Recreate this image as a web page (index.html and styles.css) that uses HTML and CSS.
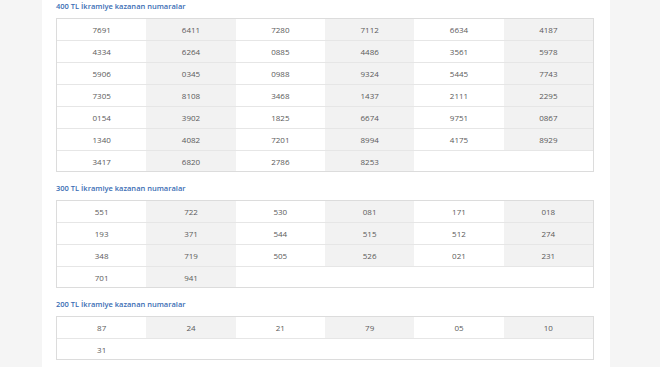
FILE: index.html
```html
<!DOCTYPE html>
<html lang="tr">
<head>
<meta charset="utf-8">
<link rel="stylesheet" href="styles.css">
</head>
<body>
<div class="page">
  <section class="prize">
    <h3 class="prize-title">400 TL İkramiye kazanan numaralar</h3>
    <table class="numbers">
      <tr><td>7691</td><td>6411</td><td>7280</td><td>7112</td><td>6634</td><td>4187</td></tr>
      <tr><td>4334</td><td>6264</td><td>0885</td><td>4486</td><td>3561</td><td>5978</td></tr>
      <tr><td>5906</td><td>0345</td><td>0988</td><td>9324</td><td>5445</td><td>7743</td></tr>
      <tr><td>7305</td><td>8108</td><td>3468</td><td>1437</td><td>2111</td><td>2295</td></tr>
      <tr><td>0154</td><td>3902</td><td>1825</td><td>6674</td><td>9751</td><td>0867</td></tr>
      <tr><td>1340</td><td>4082</td><td>7201</td><td>8994</td><td>4175</td><td>8929</td></tr>
      <tr><td>3417</td><td>6820</td><td>2786</td><td>8253</td><td class="empty" colspan="2"></td></tr>
    </table>
  </section>
  <section class="prize">
    <h3 class="prize-title">300 TL İkramiye kazanan numaralar</h3>
    <table class="numbers">
      <tr><td>551</td><td>722</td><td>530</td><td>081</td><td>171</td><td>018</td></tr>
      <tr><td>193</td><td>371</td><td>544</td><td>515</td><td>512</td><td>274</td></tr>
      <tr><td>348</td><td>719</td><td>505</td><td>526</td><td>021</td><td>231</td></tr>
      <tr><td>701</td><td>941</td><td class="empty" colspan="4"></td></tr>
    </table>
  </section>
  <section class="prize">
    <h3 class="prize-title">200 TL İkramiye kazanan numaralar</h3>
    <table class="numbers">
      <tr><td>87</td><td>24</td><td>21</td><td>79</td><td>05</td><td>10</td></tr>
      <tr><td>31</td><td class="empty" colspan="5"></td></tr>
    </table>
  </section>
</div>
</body>
</html>
```

FILE: styles.css
```css
html, body {
  margin: 0;
  padding: 0;
  background: #f5f5f5;
  font-family: "Open Sans", "Liberation Sans", sans-serif;
}
.page {
  margin-left: 42px;
  width: 538px;
  padding: 0 16px 20px 14px;
  background: #fff;
  min-height: 367px;
}
.prize {
  margin-bottom: 10px;
}
.prize-title {
  margin: 0 0 6px 0;
  height: 12px;
  line-height: 12px;
  font-size: 7.5px;
  font-weight: 600;
  color: #3a6db4;
}
.numbers {
  width: 538px;
  border-collapse: separate;
  border-spacing: 0;
  table-layout: fixed;
  border: 1px solid #dcdcdc;
}
.numbers td {
  box-sizing: border-box;
  height: 22px;
  padding: 0;
  border-top: 1px solid #e6e6e6;
  text-align: center;
  font-size: 8px;
  color: #5a5a5a;
  background: #fff;
}
.numbers tr:first-child td {
  border-top: none;
  height: 21px;
}
.numbers tr:last-child td {
  height: 21px;
}
.numbers td:nth-child(even) {
  background: #f2f2f2;
}
.numbers td.empty {
  background: #fff;
}
```
